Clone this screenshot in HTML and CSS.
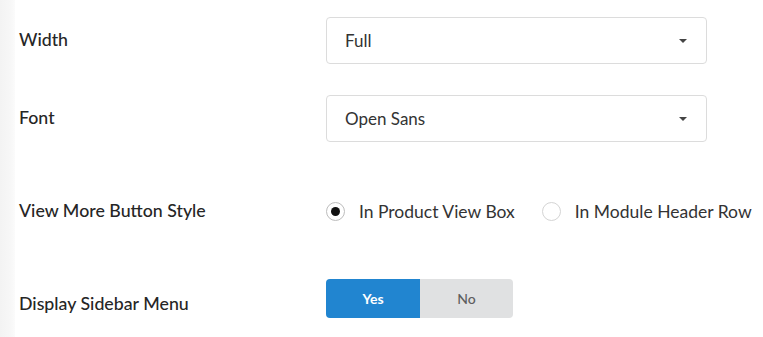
FILE: index.html
```html
<!DOCTYPE html>
<html>
<head>
<meta charset="utf-8">
<link rel="stylesheet" href="styles.css">
</head>
<body>
<div class="page">
  <div class="strip"></div>
  <div class="form">
    <div class="row row-select">
      <div class="label">Width</div>
      <div class="select"><span>Full</span><span class="caret"></span></div>
    </div>
    <div class="row row-select row2">
      <div class="label">Font</div>
      <div class="select"><span>Open Sans</span><span class="caret"></span></div>
    </div>
    <div class="row row-radio">
      <div class="label">View More Button Style</div>
      <div class="radios">
        <label class="radio"><span class="dot checked"></span>In Product View Box</label>
        <label class="radio"><span class="dot"></span>In Module Header Row</label>
      </div>
    </div>
    <div class="row row-toggle">
      <div class="label">Display Sidebar Menu</div>
      <div class="toggle">
        <span class="opt on">Yes</span>
        <span class="opt off">No</span>
      </div>
    </div>
  </div>
</div>
</body>
</html>
```
FILE: styles.css
```css
html, body {
  margin: 0;
  padding: 0;
  background: #fff;
}
body {
  font-family: Lato, "Open Sans", sans-serif;
  color: #222;
  width: 763px;
  height: 337px;
  overflow: hidden;
}
.page {
  display: flex;
  height: 337px;
}
.strip {
  width: 15px;
  flex: none;
  background: linear-gradient(to right, #f3f3f3, #f7f7f7 70%, #fbfbfb);
}
.form {
  padding-left: 4px;
  padding-top: 17px;
  display: flex;
  flex-direction: column;
}
.row {
  display: flex;
  align-items: center;
}
.label {
  width: 307px;
  flex: none;
  font-size: 17.75px;
  font-weight: 500;
  color: #262626;
  padding-bottom: 3px;
}
.row-select { height: 47px; }
.row2 { margin-top: 31px; }
.row-radio { height: 40px; margin-top: 49px; }
.row-toggle { height: 39px; margin-top: 48px; }
.row-toggle .label { padding-bottom: 0; margin-top: 9px; }
.select {
  box-sizing: border-box;
  width: 381px;
  height: 47px;
  border: 1px solid #dcdcdc;
  border-radius: 4px;
  display: flex;
  align-items: center;
  justify-content: space-between;
  padding: 0 18px 0 18px;
  font-size: 17px;
  color: #333;
}
.caret {
  width: 0;
  height: 0;
  border-left: 4px solid transparent;
  border-right: 4px solid transparent;
  border-top: 4px solid #444;
  margin-right: 1px;
}
.radios {
  display: flex;
  align-items: center;
  gap: 27px;
}
.radio {
  display: flex;
  align-items: center;
  font-size: 17.5px;
  color: #333;
}
.dot {
  box-sizing: border-box;
  width: 19px;
  height: 19px;
  border-radius: 50%;
  border: 1px solid #d4d4d4;
  margin-right: 14px;
  display: flex;
  align-items: center;
  justify-content: center;
}
.dot.checked { border-color: #bdbdbd; }
.dot.checked::after {
  content: "";
  width: 9px;
  height: 9px;
  border-radius: 50%;
  background: #111;
}
.toggle {
  display: flex;
  height: 39px;
  border-radius: 4px;
  overflow: hidden;
}
.opt {
  width: 94px;
  display: flex;
  align-items: center;
  justify-content: center;
  font-size: 14px;
  font-weight: 700;
}
.opt.on {
  background: #2185d0;
  color: #fff;
}
.opt.off {
  width: 93px;
  background: #e0e1e2;
  color: #5e5e5e;
  font-weight: 500;
}
```
